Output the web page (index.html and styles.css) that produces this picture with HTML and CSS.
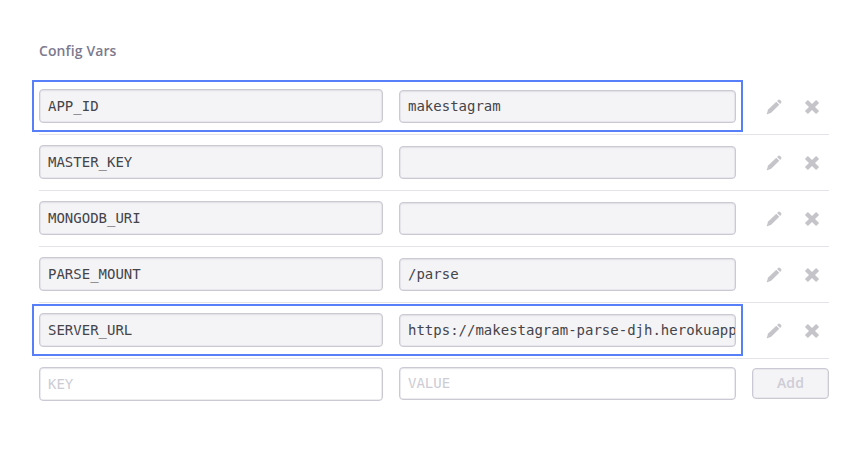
FILE: index.html
```html
<!DOCTYPE html>
<html lang="en">
<head>
<meta charset="utf-8">
<title>Config Vars</title>
<link rel="stylesheet" href="styles.css">
</head>
<body>
<svg width="0" height="0" class="defs">
  <symbol id="pencil" viewBox="0 0 16 16">
    <path d="M.6 15.4 2.1 10.6 10.3 2.7 13.3 5.7 5.2 13.7Z"/>
    <path d="M11.1 1.9 12.2.8Q13.1.1 14 .9L15.1 2Q15.9 2.9 15.2 3.8L14.1 4.9Z"/>
  </symbol>
  <symbol id="cross" viewBox="0 0 16 16">
    <path d="M3.9.9 8 5 12.1.9 15.1 3.9 11 8 15.1 12.1 12.1 15.1 8 11 3.9 15.1.9 12.1 5 8 .9 3.9Z"/>
  </symbol>
</svg>
<main class="config">
  <h2 class="title">Config Vars</h2>
  <div class="row marked">
    <div class="field key">APP_ID</div><div class="field value">makestagram</div>
    <svg class="icon edit"><use href="#pencil"/></svg><svg class="icon remove"><use href="#cross"/></svg>
  </div>
  <div class="row">
    <div class="field key">MASTER_KEY</div><div class="field value"></div>
    <svg class="icon edit"><use href="#pencil"/></svg><svg class="icon remove"><use href="#cross"/></svg>
  </div>
  <div class="row">
    <div class="field key">MONGODB_URI</div><div class="field value"></div>
    <svg class="icon edit"><use href="#pencil"/></svg><svg class="icon remove"><use href="#cross"/></svg>
  </div>
  <div class="row">
    <div class="field key">PARSE_MOUNT</div><div class="field value">/parse</div>
    <svg class="icon edit"><use href="#pencil"/></svg><svg class="icon remove"><use href="#cross"/></svg>
  </div>
  <div class="row marked">
    <div class="field key">SERVER_URL</div><div class="field value">https://makestagram-parse-djh.herokuapp</div>
    <svg class="icon edit"><use href="#pencil"/></svg><svg class="icon remove"><use href="#cross"/></svg>
  </div>
  <div class="row new">
    <div class="field key">KEY</div><div class="field value">VALUE</div>
    <button class="add" disabled>Add</button>
  </div>
</main>
</body>
</html>
```
FILE: styles.css
```css
*, ::before { box-sizing: border-box; }
body { margin: 0; background: #fff; }
.defs { display: block; }
.config { width: 790px; margin-left: 39px; padding-top: 41px; }
.title {
  margin: 0;
  height: 38px;
  font: 600 14px/20px "Open Sans", sans-serif;
  letter-spacing: .1px;
  color: #7c7a8f;
}
.row {
  position: relative;
  display: flex;
  align-items: flex-start;
  height: 56px;
  padding-top: 10px;
  border-bottom: 1px solid #e4e3ea;
}
.marked::before {
  content: "";
  position: absolute;
  left: -7px;
  top: 1px;
  width: 711px;
  height: 52px;
  border: 2px solid #587ffa;
}
.field {
  height: 34px;
  padding-left: 8px;
  border: 1px solid #cbcad4;
  border-radius: 4px;
  background: #f4f4f6;
  box-shadow: inset 0 0 0 .5px #dcdbe2, inset 0 1px 2px rgba(60, 55, 90, .08);
  font: 14px/32px "DejaVu Sans Mono", monospace;
  color: #45444a;
  white-space: nowrap;
  overflow: hidden;
}
.key { width: 344px; margin-right: 16px; }
.value { width: 337px; height: 33px; margin-top: 1px; line-height: 30px; }
.icon { width: 16px; height: 16px; margin-top: 10px; fill: #c5c5c9; }
.edit { margin-left: 30px; }
.remove { margin-left: 22px; }
.new { border: 0; padding-top: 8px; }
.new .field { background: #fff; color: #cdccd5; }
.new .value { margin-top: 0; }
.add {
  width: 77px;
  height: 31px;
  margin: 1px 0 0 16px;
  padding: 0 0 2px;
  border: 1px solid #cbcad4;
  border-radius: 4px;
  background: #f4f4f6;
  box-shadow: inset 0 0 0 .5px #dcdbe2;
  font: 600 14px/27px "Open Sans", sans-serif;
  letter-spacing: .1px;
  color: #cdccd5;
}
```
